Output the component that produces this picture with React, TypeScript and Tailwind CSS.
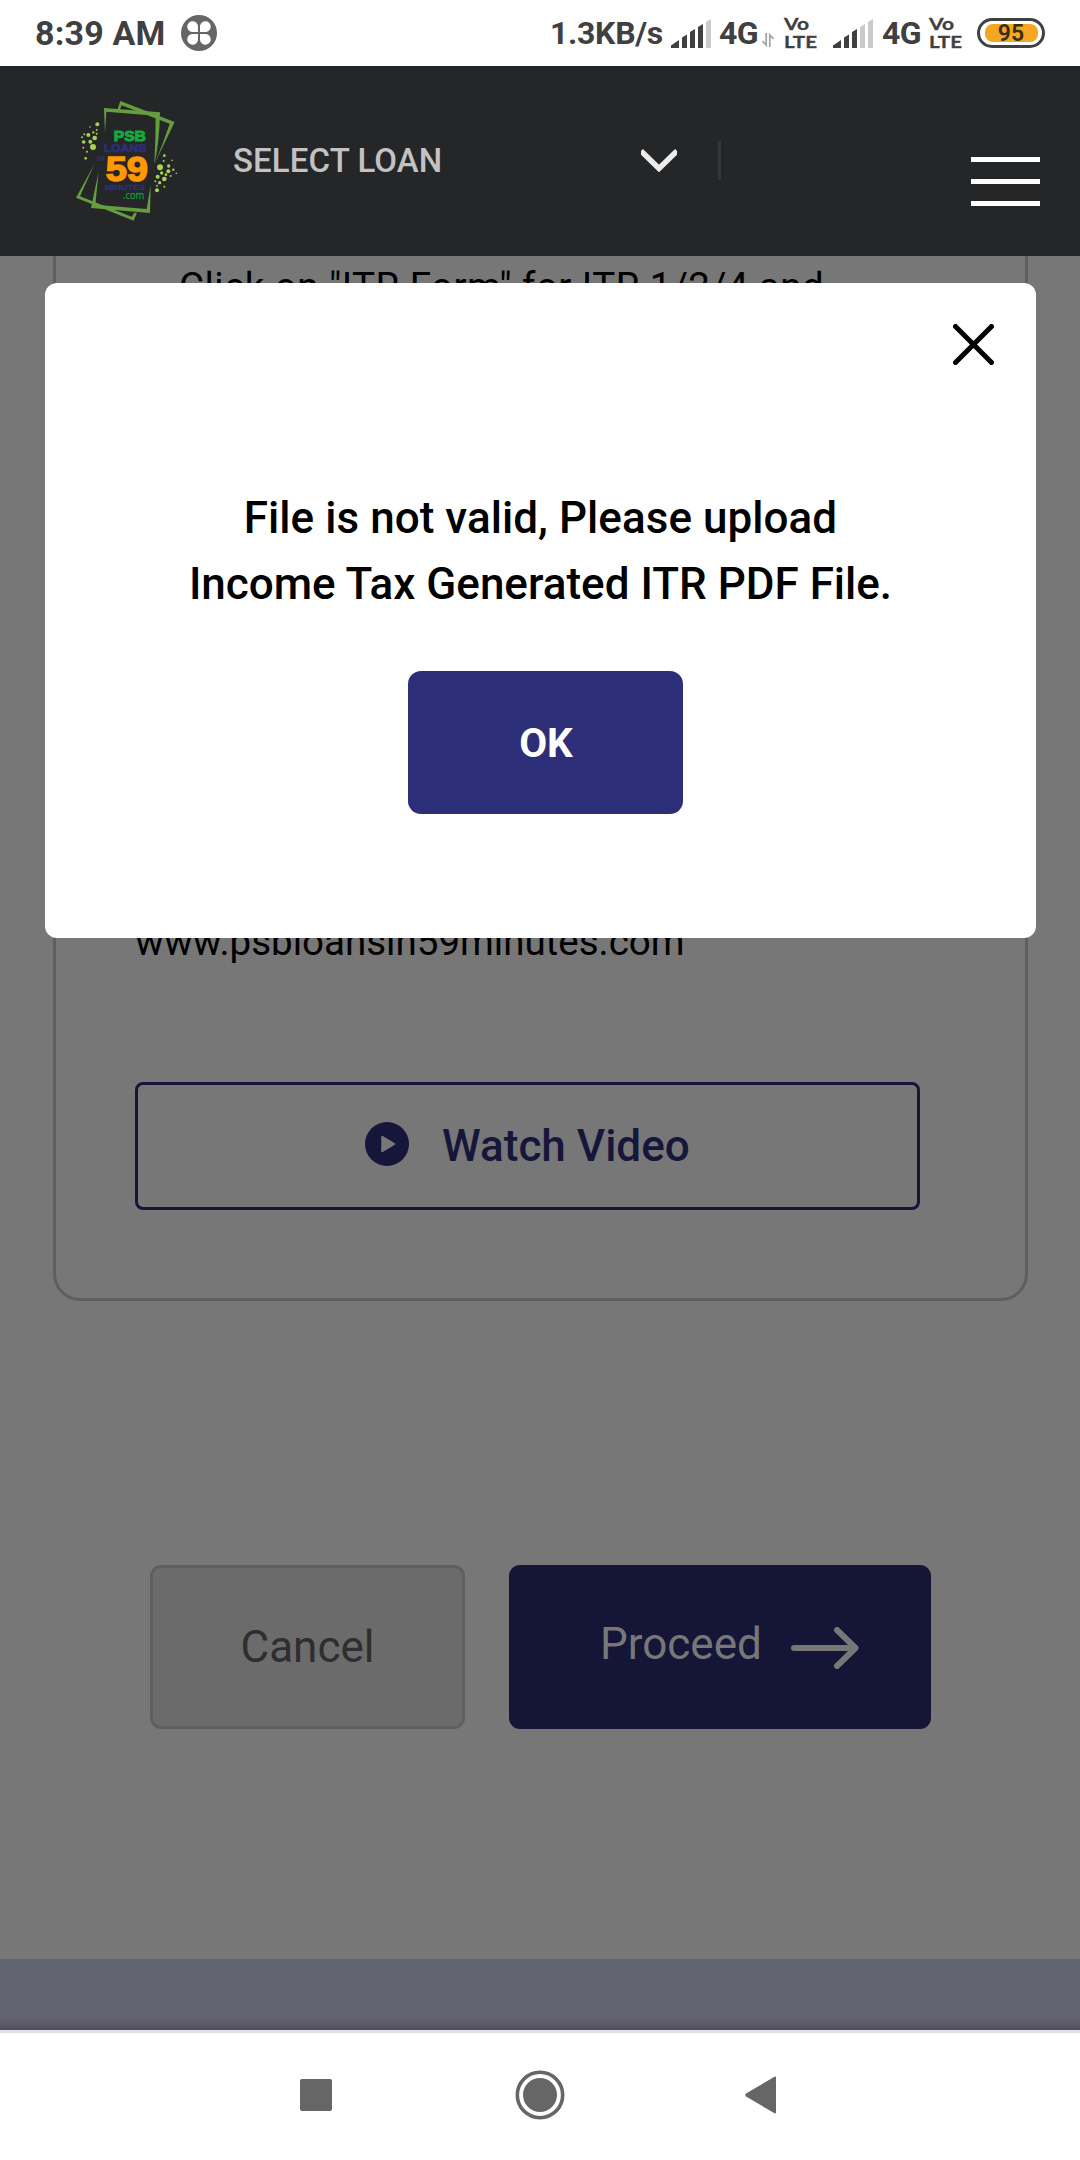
import React from "react";

const DOTS: [number, number, number][] = [
  [112, 103, 6], [90, 111, 2.5], [110, 120, 3], [73, 133, 3], [85, 135, 6], [100, 127, 3.5], [110, 131, 3], [66, 142, 3],
  [104, 144, 7], [71, 156, 5.5], [91, 155, 6], [99, 171, 9], [70, 173, 3], [81, 185, 3], [77, 205, 4],
  [313, 197, 4], [336, 211, 2.5], [311, 213, 3], [300, 232, 9], [326, 228, 5], [340, 239, 3.5], [349, 250, 2.5],
  [305, 249, 5], [325, 244, 6], [293, 260, 6], [318, 254, 4], [332, 258, 3], [286, 274, 3], [299, 278, 5], [313, 267, 7],
  [291, 301, 6], [313, 290, 3], [291, 287, 3],
];

function Logo() {
  return (
    <svg className="h-[140px] w-[140px] shrink-0" viewBox="0 0 420 420">
      <g fill="#659e3e">
        <path d="M132 54L300 67Q298 160 283 222Q287 150 287 77L139 65L135 130Z" />
        <path d="M172 60L181 33L344 96L283 222Q310 160 329 101L185 46L179 60Z" />
        <path d="M104 221L48 323L221 392L231 368L223 368L215 380L60 319Z" />
        <path d="M116 245L93 354L270 369L272 286L260 357L106 344Z" />
      </g>
      <g fill="#a9d04f">
        {DOTS.map(([x, y, r], i) => (
          <circle key={i} cx={x} cy={y} r={r} />
        ))}
      </g>
      <g fontFamily="'Liberation Sans', sans-serif" fontWeight="700" strokeWidth="3">
        <text x="161" y="152" fontSize="46" textLength="97" lengthAdjust="spacingAndGlyphs" fill="#14ab3c" stroke="#14ab3c">PSB</text>
        <text x="131" y="185" fontSize="34" textLength="127" lengthAdjust="spacingAndGlyphs" fill="#2d2f7a" stroke="#2d2f7a" strokeWidth="2">LOANS</text>
        <text x="110" y="213" fontSize="21" textLength="24" lengthAdjust="spacingAndGlyphs" fill="#2d2f7a">IN</text>
        <text x="137" y="274" fontSize="106" textLength="127" lengthAdjust="spacingAndGlyphs" fill="#ff9800" stroke="#ff9800" strokeWidth="4.5">59</text>
        <text x="134" y="300" fontSize="23" textLength="121" lengthAdjust="spacingAndGlyphs" fill="#2d2f7a" stroke="#2d2f7a" strokeWidth="1">MINUTES</text>
      </g>
      <text x="189" y="327" fontFamily="'Open Sans', sans-serif" fontSize="33" textLength="64" lengthAdjust="spacingAndGlyphs" fill="#129a3c" stroke="#129a3c" strokeWidth="1">.com</text>
    </svg>
  );
}

function Signal({ strength }: { strength: number }) {
  const bars = ["M0 29V26.5L8 21V29Z", "M11 29V18.5L16 15.5V29Z", "M19 29V13L24 10V29Z", "M27 29V8L32 5V29Z", "M35 29V3L40 0V29Z"];
  return (
    <svg className="h-[29px] w-10 shrink-0" viewBox="0 0 40 29">
      {bars.map((d, i) => (
        <path key={i} d={d} fill={i < strength ? "#404040" : "#cacaca"} />
      ))}
    </svg>
  );
}

function Volte() {
  return (
    <svg className="h-[30px] w-8 shrink-0 overflow-visible" viewBox="0 0 32 30" fontFamily="Lato, sans-serif" fontWeight="700" fill="#404040" stroke="#404040" strokeWidth="0.3">
      <text x="0" y="12.3" fontSize="17" textLength="25" lengthAdjust="spacingAndGlyphs">Vo</text>
      <text x="0" y="29.7" fontSize="17" textLength="33" lengthAdjust="spacingAndGlyphs">LTE</text>
    </svg>
  );
}

function StatusBar() {
  return (
    <div className="flex h-[66px] shrink-0 items-center bg-white pl-[35px] text-[#404040]">
      <span className="w-[146px] text-[34px] font-bold leading-[68px] tracking-[0.2px]">8:39 AM</span>
      <svg className="h-9 w-9 shrink-0" viewBox="0 0 36 36">
        <circle cx="18" cy="18" r="18" fill="#666" />
        <g fill="#fff">
          <path d="M17 17H12A5.4 5.4 0 1 1 17 11Z" />
          <path d="M19 17H24A5.4 5.4 0 1 0 19 11Z" />
          <path d="M17 19H12A5.4 5.4 0 1 0 17 25Z" />
          <path d="M19 19H24A5.4 5.4 0 1 1 19 25Z" />
        </g>
      </svg>
      <span className="ml-[333px] w-[121px] whitespace-nowrap text-[32px] font-bold leading-[68px] tracking-[-0.3px]">1.3KB/s</span>
      <Signal strength={4} />
      <span className="ml-2 w-[43px] text-[32px] font-bold leading-[68px] tracking-[-0.6px]">4G</span>
      <svg className="mt-3.5 h-3.5 w-3 shrink-0" viewBox="0 0 12 14" fill="none" stroke="#a5a5a5" strokeWidth="1.8">
        <path d="M4.2 0V12L0.5 8M7.8 14V2L11.5 6" />
      </svg>
      <div className="ml-2.5 flex"><Volte /></div>
      <div className="ml-[17px] flex"><Signal strength={3} /></div>
      <span className="ml-[9px] w-[47px] text-[32px] font-bold leading-[68px] tracking-[-0.6px]">4G</span>
      <Volte />
      <div className="ml-4 flex h-[30px] w-[68px] items-center justify-center rounded-full border-[3px] border-[#404040]">
        <div className="flex h-[18px] w-[53px] items-center justify-center rounded-[8px] bg-[#f5a623] text-[23px] font-semibold leading-none text-[#3b2d11]">95</div>
      </div>
    </div>
  );
}

function Header() {
  return (
    <header className="flex h-[190px] shrink-0 items-start bg-[#252628] pl-[60px]">
      <div className="mt-6"><Logo /></div>
      <span className="ml-[33px] mt-[71px] w-[408px] text-[33px] font-medium leading-[48px] tracking-[0.1px] text-[#c2c2c2]">SELECT LOAN</span>
      <svg className="mt-[82px] h-6 w-9 shrink-0" viewBox="0 0 36 24">
        <path d="M0 3L18 20.5L36 3" fill="none" stroke="#ececec" strokeWidth="5.5" />
      </svg>
      <div className="ml-[41px] mt-[75px] h-[39px] w-[3px] bg-[#343638]" />
      <div className="ml-[250px] mt-[91px] flex w-[69px] flex-col gap-[17px]">
        <div className="h-[5px] bg-white" />
        <div className="h-[5px] bg-white" />
        <div className="h-[5px] bg-white" />
      </div>
    </header>
  );
}

function Dialog() {
  return (
    <div className="absolute left-[45px] top-[283px] flex h-[655px] w-[991px] flex-col items-center rounded-[12px] bg-white">
      <button className="mr-[42px] mt-[41px] h-[41px] w-[41px] self-end">
        <svg viewBox="0 0 41 41" className="h-full w-full">
          <path d="M2.5 2.5L38.5 38.5M38.5 2.5L2.5 38.5" stroke="#000" strokeWidth="5" strokeLinecap="round" />
        </svg>
      </button>
      <p className="mt-[120px] whitespace-nowrap text-center text-[44px] font-medium leading-[66px] text-black">
        <span className="tracking-[0.05px]">File is not valid, Please upload</span>
        <br />
        Income Tax Generated ITR PDF File.
      </p>
      <button className="ml-[10px] mt-[54px] h-[143px] w-[275px] rounded-[13px] bg-[#2d2e78] pl-px pt-px text-[40.5px] font-bold text-white">OK</button>
    </div>
  );
}

export default function App() {
  return (
    <div className="relative flex h-[2160px] w-[1080px] flex-col overflow-hidden bg-[#777777] font-[Roboto,sans-serif]">
      <StatusBar />
      <Header />
      <main className="flex h-[1703px] shrink-0 flex-col">
        <section className="ml-[53px] flex h-[1045px] w-[975px] flex-col rounded-b-[27px] border-[3px] border-t-0 border-[#5f5f5f] pl-[79px] text-[38.5px] leading-[58px] text-black">
          <p className="ml-[44px] mt-[2px] whitespace-nowrap tracking-[0.46px]">Click on "ITR Form" for ITR 1/2/4 and</p>
          <p className="mt-[597px] whitespace-nowrap">www.psbloansin59minutes.com</p>
          <button className="mt-[111px] flex h-[128px] w-[785px] items-center rounded-[8px] border-[3px] border-[#15163a] pl-[227px] text-[44px] font-medium text-[#15163a]">
            <svg className="mb-1 h-11 w-11" viewBox="0 0 44 44">
              <circle cx="22" cy="22" r="22" fill="#15163a" />
              <path d="M17 14.5L29.5 22L17 29.5Z" fill="#777" stroke="#777" strokeWidth="1.5" strokeLinejoin="round" />
            </svg>
            <span className="ml-[33px]">Watch Video</span>
          </button>
        </section>
        <div className="ml-[150px] mt-[264px] flex gap-11">
          <button className="h-[164px] w-[315px] rounded-[11px] border-[3px] border-[#5f5f5f] bg-[#6b6b6b] text-[44px] text-[#2e2e2e]">Cancel</button>
          <button className="flex h-[164px] w-[422px] items-center rounded-[11px] bg-[#141537] pl-[91px] text-[44px] text-[#777777]">
            <span className="mb-1.5 w-[191px] text-left">Proceed</span>
            <svg className="mt-[2px] h-[42px] w-[68px]" viewBox="0 0 68 42" fill="none" stroke="#777" strokeWidth="6" strokeLinecap="round" strokeLinejoin="round">
              <path d="M3 21H64M46 3L64.5 21L46 39" />
            </svg>
          </button>
        </div>
      </main>
      <div className="h-[71px] shrink-0 bg-[linear-gradient(#636471_0,#636471_55px,#625e6c_62px,#524d5a_71px)]" />
      <nav className="flex h-[130px] items-center border-t-[3px] border-[#e1dee4] bg-white pb-[3px] pl-[300px]">
        <div className="h-8 w-8 rounded-[2px] bg-[#666]" />
        <svg className="ml-[183px] h-[50px] w-[50px]" viewBox="0 0 50 50">
          <circle cx="25" cy="25" r="22.7" fill="none" stroke="#666" strokeWidth="3.6" />
          <circle cx="25" cy="25" r="17" fill="#666" />
        </svg>
        <svg className="ml-[180px] h-[38px] w-8" viewBox="0 0 32 38">
          <path d="M1 17.5L29.5 0.8Q31 0 31 2V36Q31 38 29.5 37.2L1 20.5Q-0.5 19 1 17.5Z" fill="#666" />
        </svg>
      </nav>
      <Dialog />
    </div>
  );
}
